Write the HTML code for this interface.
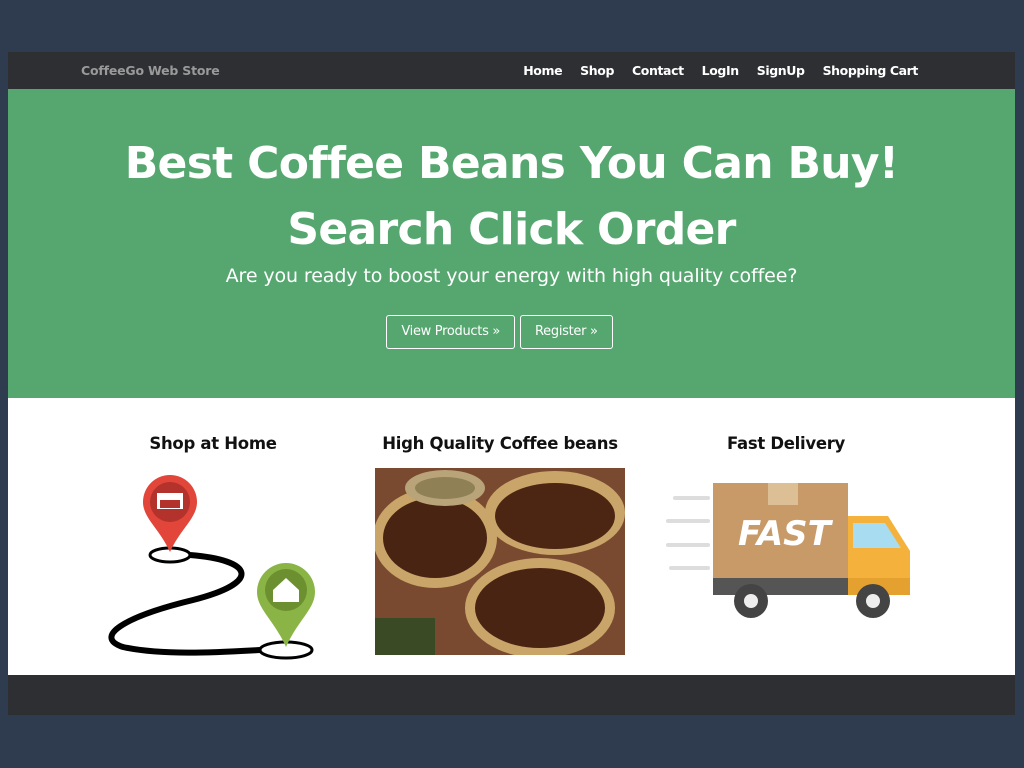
<!DOCTYPE html>
<html><head><meta charset="utf-8"><style>
*{margin:0;padding:0;box-sizing:border-box}
body{width:1024px;height:768px;background:#2f3b4f;font-family:"DejaVu Sans","Liberation Sans",sans-serif;position:relative;overflow:hidden}
#page{position:absolute;left:8px;top:52px;width:1007px;height:663px;background:#fff}
nav{height:37px;background:#2d2f33;position:relative;font-weight:bold;font-size:12.5px}
.brand{position:absolute;left:73px;top:11px;color:#9a9a9a;letter-spacing:-0.2px}
.links{position:absolute;right:97px;top:11px;color:#fff;display:flex;gap:18px;letter-spacing:-0.4px}
.hero{height:309px;background:#55a76f;color:#fff;text-align:center;position:relative}
h1{font-size:44px;font-weight:bold;line-height:66px;padding-top:42px;letter-spacing:-0.7px}
.sub{font-size:19px;margin-top:2px;letter-spacing:-0.1px}
.btns{margin-top:28px;display:flex;justify-content:center;gap:5px;padding-right:24px}
.btn{border:1px solid #fff;border-radius:3px;padding:8px 14px;font-size:13px;height:34px;letter-spacing:-0.3px}
.feat{position:relative;height:277px}
.col h3{position:absolute;font-size:16.5px;font-weight:bold;color:#111;text-align:center;width:300px;top:36px;letter-spacing:-0.3px}
footer{position:absolute;left:0;top:623px;width:1007px;height:40px;background:#2d2f33}
</style></head><body><div id="page">
<nav><div class="brand">CoffeeGo Web Store</div><div class="links"><span>Home</span><span>Shop</span><span>Contact</span><span>LogIn</span><span>SignUp</span><span>Shopping Cart</span></div></nav>
<div class="hero"><h1>Best Coffee Beans You Can Buy!<br>Search Click Order</h1><div class="sub">Are you ready to boost your energy with high quality coffee?</div>
<div class="btns"><div class="btn">View Products »</div><div class="btn">Register »</div></div></div>
<div class="feat">
<div class="col"><h3 style="left:55px">Shop at Home</h3><h3 style="left:342px">High Quality Coffee beans</h3><h3 style="left:628px">Fast Delivery</h3></div>
<svg style="position:absolute;left:95px;top:74px" width="215" height="195" viewBox="0 0 215 195">
<ellipse cx="67" cy="83" rx="20" ry="7" fill="none" stroke="#000" stroke-width="3"/>
<ellipse cx="183" cy="178" rx="26" ry="8" fill="none" stroke="#000" stroke-width="3"/>
<path d="M87 83 C150 88 160 110 90 128 C20 145 -10 165 20 175 C60 184 120 180 157 178" fill="none" stroke="#000" stroke-width="6"/>
<path d="M67 3 a27 27 0 0 1 27 27 c0 16 -16 26 -27 50 c-11 -24 -27 -34 -27 -50 a27 27 0 0 1 27 -27z" fill="#e2463a"/>
<circle cx="67" cy="30" r="20" fill="#b3322b"/>
<rect x="54" y="21" width="26" height="16" fill="#fff"/><rect x="57" y="28" width="20" height="8" fill="#b3322b"/>
<path d="M183 91 a29 29 0 0 1 29 29 c0 17 -17 28 -29 55 c-12 -27 -29 -38 -29 -55 a29 29 0 0 1 29 -29z" fill="#8ab546"/>
<circle cx="183" cy="118" r="21" fill="#6c8f30"/>
<path d="M170 118 l13 -12 l13 12 v12 h-26z" fill="#fff"/>
</svg>
<div style="position:absolute;left:367px;top:70px;width:250px;height:187px;background:#5b3220;overflow:hidden">
<svg width="250" height="187"><rect width="250" height="187" fill="#7a4a30"/>
<ellipse cx="60" cy="70" rx="62" ry="50" fill="#c9a56a"/><ellipse cx="60" cy="70" rx="52" ry="40" fill="#4a2412"/>
<ellipse cx="180" cy="45" rx="70" ry="42" fill="#c9a56a"/><ellipse cx="180" cy="48" rx="60" ry="33" fill="#4d2613"/>
<ellipse cx="165" cy="140" rx="75" ry="50" fill="#c9a56a"/><ellipse cx="165" cy="140" rx="65" ry="40" fill="#4a2412"/>
<ellipse cx="70" cy="20" rx="40" ry="18" fill="#b9a47a"/><ellipse cx="70" cy="20" rx="30" ry="11" fill="#8f8056"/>
<rect x="0" y="150" width="60" height="37" fill="#3a4a25"/></svg></div>
<svg style="position:absolute;left:655px;top:85px" width="250" height="140" viewBox="0 0 250 140">
<g stroke="#ddd" stroke-width="4" stroke-linecap="round"><line x1="12" y1="15" x2="45" y2="15"/><line x1="5" y1="38" x2="45" y2="38"/><line x1="5" y1="62" x2="45" y2="62"/><line x1="8" y1="85" x2="45" y2="85"/></g>
<rect x="50" y="0" width="135" height="95" fill="#c79a68"/><rect x="105" y="0" width="30" height="22" fill="#dcbf94"/>
<text x="75" y="62" font-family="DejaVu Sans" font-weight="bold" font-style="italic" font-size="34" fill="#fff">FAST</text>
<path d="M185 33 h40 l22 35 v40 h-62z" fill="#f4b23c"/><path d="M190 40 h32 l16 25 h-48z" fill="#a8dcf0"/>
<rect x="50" y="95" width="197" height="17" fill="#e5a12f"/><rect x="50" y="95" width="135" height="17" fill="#555"/>
<circle cx="88" cy="118" r="17" fill="#444"/><circle cx="88" cy="118" r="7" fill="#eee"/>
<circle cx="210" cy="118" r="17" fill="#444"/><circle cx="210" cy="118" r="7" fill="#eee"/></svg>
</div>
<footer></footer></div></body></html>
